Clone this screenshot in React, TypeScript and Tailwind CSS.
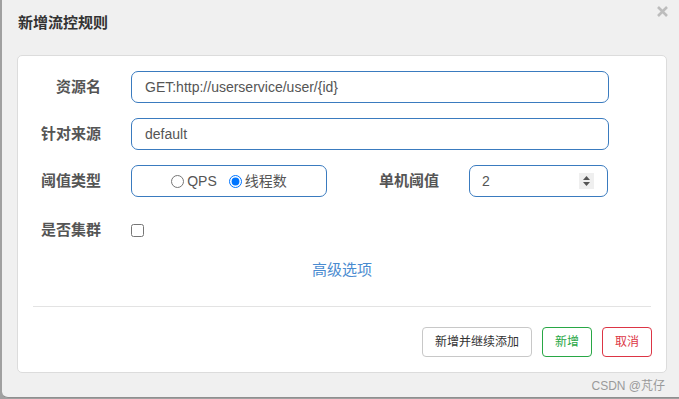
import React from "react";

const font = { fontFamily: '"Liberation Sans", "Noto Sans CJK SC", sans-serif' };

export default function App() {
  return (
    <div className="w-[679px] h-[399px] bg-[#a0a0a0] overflow-hidden" style={font}>
      <div className="ml-[2px] h-[398px] bg-[#f0f0f0] rounded-bl-[6px] border-b border-[#8f8f8f] flex flex-col">
        {/* header */}
        <div className="h-[55px] flex items-start justify-between pl-[16px] pr-[10px]">
          <div className="mt-[13px] text-[15px] font-bold text-[#333] leading-[20px]">新增流控规则</div>
          <div className="mt-[5px] text-[#c0c0c0]">
            <svg width="13" height="13" viewBox="0 0 13 13">
              <path d="M2 2 L11 11 M11 2 L2 11" stroke="#bdbdbd" strokeWidth="2.6" />
            </svg>
          </div>
        </div>
        {/* panel */}
        <div className="ml-[15px] w-[650px] h-[318px] bg-white border border-[#dcdcdc] rounded-[5px] flex flex-col pt-[15px]">
          {/* row 1 */}
          <div className="flex items-center h-[32px]">
            <div className="w-[83px] text-right text-[15px] font-bold text-[#555]">资源名</div>
            <div className="ml-[30px] w-[478px] h-[32px] border border-[#3a7bbf] rounded-[7px] flex items-center pl-[13px] text-[14px] text-[#555]">
              GET:http://userservice/user/{"{id}"}
            </div>
          </div>
          {/* row 2 */}
          <div className="flex items-center h-[32px] mt-[15px]">
            <div className="w-[83px] text-right text-[15px] font-bold text-[#555]">针对来源</div>
            <div className="ml-[30px] w-[478px] h-[32px] border border-[#3a7bbf] rounded-[7px] flex items-center pl-[13px] text-[14px] text-[#555]">
              default
            </div>
          </div>
          {/* row 3 */}
          <div className="flex items-center h-[32px] mt-[15px]">
            <div className="w-[83px] text-right text-[15px] font-bold text-[#555]">阈值类型</div>
            <div className="ml-[30px] w-[196px] h-[32px] border border-[#3a7bbf] rounded-[7px] flex items-center justify-center text-[14px] text-[#555]">
              <label className="flex items-center">
                <input type="radio" name="t" className="m-0 w-[13px] h-[13px]" />
                <span className="ml-[3px]">QPS</span>
              </label>
              <label className="flex items-center ml-[12px]">
                <input type="radio" name="t" defaultChecked className="m-0 w-[13px] h-[13px]" />
                <span className="ml-[3px]">线程数</span>
              </label>
            </div>
            <div className="w-[112px] text-right text-[15px] font-bold text-[#555]">单机阈值</div>
            <div className="ml-[30px] w-[139px] h-[32px] border border-[#3a7bbf] rounded-[7px] flex items-center justify-between pl-[12px] pr-[13px] text-[14px] text-[#555]">
              <span>2</span>
              <div className="w-[15px] h-[16px] bg-[#efefef] flex items-center justify-center">
                <svg width="9" height="12" viewBox="0 0 9 12">
                  <path d="M4.5 1 L8 5 L1 5 Z" fill="#555" />
                  <path d="M4.5 11 L8 7 L1 7 Z" fill="#555" />
                </svg>
              </div>
            </div>
          </div>
          {/* row 4 */}
          <div className="flex items-center h-[32px] mt-[17px]">
            <div className="w-[83px] text-right text-[15px] font-bold text-[#555]">是否集群</div>
            <div className="ml-[30px] flex items-center">
              <input type="checkbox" className="m-0 w-[13px] h-[13px]" />
            </div>
          </div>
          {/* advanced */}
          <div className="mt-[12px] h-[24px] flex items-center justify-center text-[15px] text-[#4a8bd0]">高级选项</div>
          {/* divider */}
          <div className="mt-[24px] mx-[15px] h-px bg-[#e3e3e3]"></div>
          {/* buttons */}
          <div className="mt-[20px] flex justify-end pr-[14px] gap-[10px] text-[12px]">
            <div className="w-[110px] h-[30px] border border-[#c8c8c8] rounded-[4px] flex items-center justify-center text-[#333]">新增并继续添加</div>
            <div className="w-[50px] h-[30px] border border-[#28a745] rounded-[4px] flex items-center justify-center text-[#28a745]">新增</div>
            <div className="w-[50px] h-[30px] border border-[#dc3545] rounded-[4px] flex items-center justify-center text-[#dc3545]">取消</div>
          </div>
        </div>
        {/* footer */}
        <div className="flex justify-end pr-[14px] mt-[4px] text-[12px] text-[#9a9a9a]">CSDN @芃仔</div>
      </div>
    </div>
  );
}
